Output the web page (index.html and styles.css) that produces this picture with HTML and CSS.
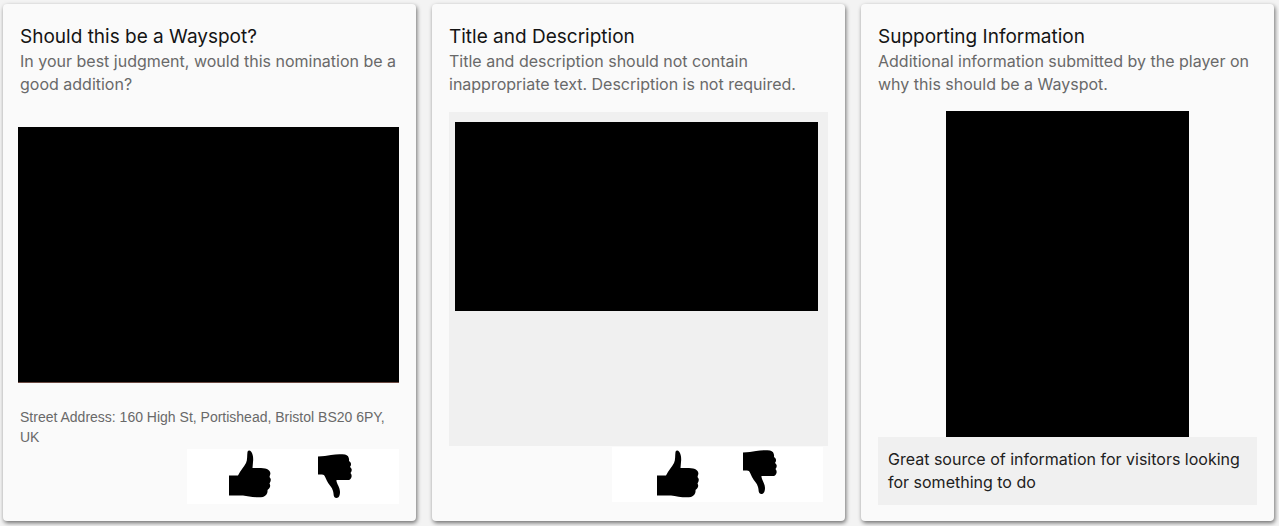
FILE: index.html
```html
<!DOCTYPE html>
<html lang="en">
<head>
<meta charset="utf-8">
<meta name="viewport" content="width=device-width, initial-scale=1">
<title>Nomination review</title>
<link rel="stylesheet" href="styles.css">
</head>
<body>
<svg class="symbols" aria-hidden="true">
  <symbol id="thumb-up" viewBox="0 0 42 48">
    <path d="M0 25.500H9C11 21 15 17 17 13C18.500 10 18 5 18.500 2C19 0 21 0 22 1.500C24 4 24.500 8 24 12L23.500 18C29 18 34 17.500 38 19C41 20.500 42 23 41 25L40.500 27C42.500 29 42 31 40.500 33.500C42 36 41 38 38.500 40C39 43 37 46 34 47C28 48 20 46.500 14 45.500H0Z"/>
  </symbol>
  <symbol id="thumb-down" viewBox="0 0 34 44">
    <path d="M0 2.500C5 2 9 2 13 1C18 0 23 0 27 .5C30 1 31.500 4 31 7C33.500 8.500 33.500 11 32 13C34.500 15 34 17 32.500 19C35 22 33 25 31 26H18.500C18 29 22 33 22 38C22 41 21 44 18.500 44C15 44 16 40 15 37C14 33 11 31 9 27C7.500 24 7 20.500 4 20.500H0Z"/>
  </symbol>
</svg>
<main class="board">
  <section class="card">
    <h2 class="title">Should this be a Wayspot?</h2>
    <p class="lead">In your best judgment, would this nomination be a good addition?</p>
    <div class="photo" role="img" aria-label="Nomination photo"></div>
    <p class="address">Street Address: 160 High St, Portishead, Bristol BS20 6PY, UK</p>
    <div class="votes">
      <button class="vote" type="button" aria-label="Thumbs up"><svg class="up"><use href="#thumb-up"/></svg></button>
      <button class="vote" type="button" aria-label="Thumbs down"><svg class="down"><use href="#thumb-down"/></svg></button>
    </div>
  </section>
  <section class="card">
    <h2 class="title">Title and Description</h2>
    <p class="lead">Title and description should not contain inappropriate text. Description is not required.</p>
    <div class="panel">
      <div class="redacted" role="img" aria-label="Title and description"></div>
    </div>
    <div class="votes votes-inset">
      <button class="vote" type="button" aria-label="Thumbs up"><svg class="up"><use href="#thumb-up"/></svg></button>
      <button class="vote" type="button" aria-label="Thumbs down"><svg class="down"><use href="#thumb-down"/></svg></button>
    </div>
  </section>
  <section class="card">
    <h2 class="title">Supporting Information</h2>
    <p class="lead">Additional information submitted by the player on why this should be a Wayspot.</p>
    <div class="portrait" role="img" aria-label="Supporting photo"></div>
    <p class="statement">Great source of information for visitors looking for something to do</p>
  </section>
</main>
</body>
</html>
```
FILE: styles.css
```css
* { box-sizing: border-box; }
body {
  margin: 0;
  background: #f3f3f3;
  color: #212121;
  font: 16px/23px Inter, "Liberation Sans", sans-serif;
}
.symbols { display: none; }
.board {
  display: grid;
  grid-template-columns: repeat(3, minmax(0, 1fr));
  gap: 16px;
  min-height: 100vh;
  padding: 4px 5px 5px 3px;
}
.card {
  display: flex;
  flex-direction: column;
  padding: 20px 17px 16px;
  border-radius: 4px;
  background: #fafafa;
  box-shadow: 1px 2px 4px rgba(0, 0, 0, .55);
}
.title {
  margin: 0;
  color: #141414;
  font-size: 19px;
  font-weight: 400;
  line-height: 26px;
}
.lead { margin: 0; color: #696969; }
.photo {
  aspect-ratio: 381 / 256;
  margin: 31px 0 0 -2px;
  border-bottom: 1px solid #6b4a42;
  background: #000;
}
.address {
  margin: 24px 0 0;
  color: #696969;
  font: 14px/20px "Liberation Sans", Arial, sans-serif;
}
.votes {
  display: flex;
  align-self: flex-end;
  align-items: flex-end;
  gap: 47px;
  margin-top: 2px;
  padding: 1px 47px 6px 42px;
  background: #fff;
}
.votes-inset {
  margin: 1px 5px 0 0;
  padding: 3px 46px 4px 45px;
  gap: 44px;
  align-items: flex-start;
}
.vote {
  display: flex;
  padding: 0;
  border: 0;
  background: none;
  cursor: pointer;
}
.vote svg { fill: #000; }
.up { width: 42px; height: 48px; }
.down { width: 34px; height: 44px; }
.panel {
  height: 334px;
  margin: 16px 0 0;
  padding: 10px 10px 10px 6px;
  background: #f0f0f0;
}
.redacted { aspect-ratio: 363 / 189; background: #000; }
.portrait {
  width: 64%;
  aspect-ratio: 243 / 327;
  margin: 15px auto 0;
  background: #000;
}
.statement {
  margin: 0;
  padding: 11px 10px;
  background: #f0f0f0;
}
```
